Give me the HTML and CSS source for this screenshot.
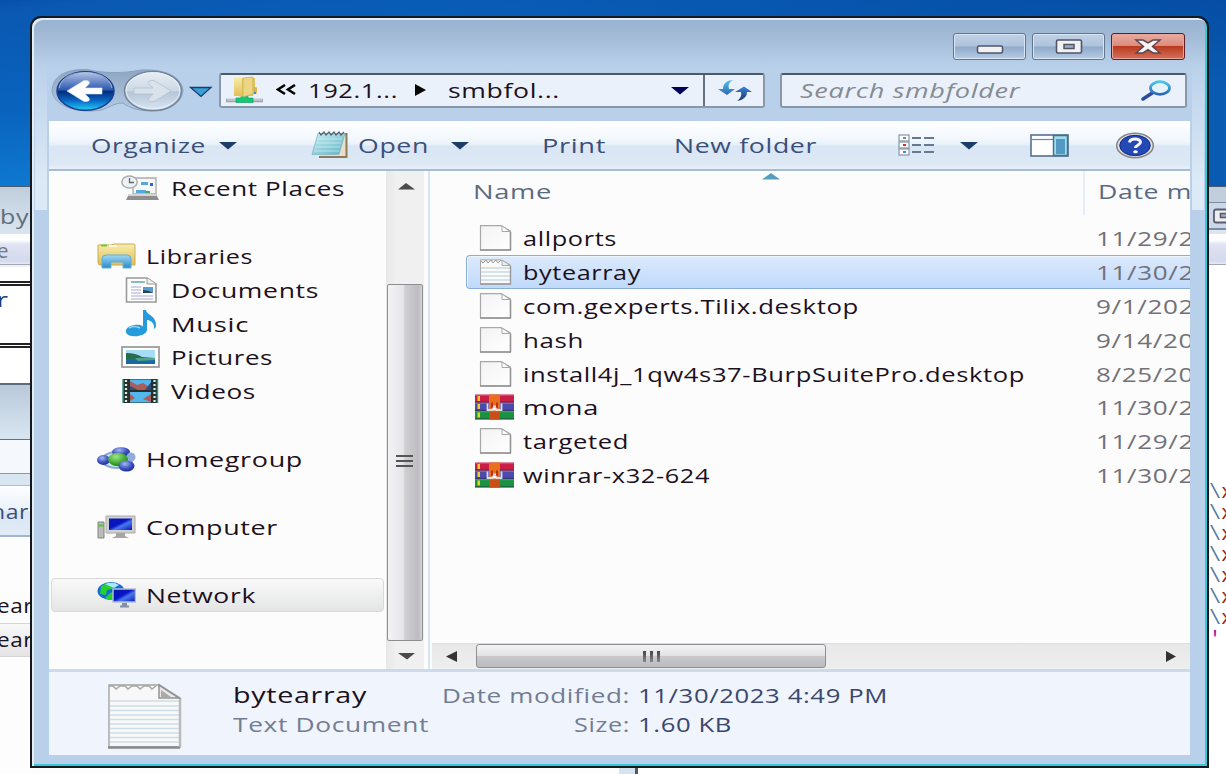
FILE: index.html
```html
<!DOCTYPE html>
<html lang="en">
<head>
<meta charset="utf-8">
<title>smbfolder</title>
<link rel="stylesheet" href="styles.css">
</head>
<body>
<svg class="defs" width="0" height="0" aria-hidden="true">
  <defs>
    <linearGradient id="paper" x1="0" y1="0" x2="1" y2="1"><stop offset="0" stop-color="#f3f3f3"/><stop offset="1" stop-color="#fff"/></linearGradient>
    <linearGradient id="ball" x1="0" y1="0" x2="0" y2="1"><stop offset="0" stop-color="#b7c6e6"/><stop offset=".48" stop-color="#2a57ae"/><stop offset=".5" stop-color="#042878"/><stop offset=".75" stop-color="#0968c4"/><stop offset="1" stop-color="#25cdf8"/></linearGradient>
    <linearGradient id="pale" x1="0" y1="0" x2="0" y2="1"><stop offset="0" stop-color="#e8eef4"/><stop offset=".5" stop-color="#cbd8e5"/><stop offset=".52" stop-color="#b5c6d9"/><stop offset="1" stop-color="#d8e5f3"/></linearGradient>
    <linearGradient id="well" x1="0" y1="0" x2="0" y2="1"><stop offset="0" stop-color="#8ea6c2"/><stop offset="1" stop-color="#b4cae4"/></linearGradient>
    <linearGradient id="folder" x1="0" y1="0" x2="0" y2="1"><stop offset="0" stop-color="#f8edab"/><stop offset="1" stop-color="#dfbd58"/></linearGradient>
    <linearGradient id="sky" x1="0" y1="0" x2="0" y2="1"><stop offset="0" stop-color="#9fd9f5"/><stop offset="1" stop-color="#2a8ac8"/></linearGradient>
    <linearGradient id="teal" x1="0" y1="0" x2="1" y2="1"><stop offset="0" stop-color="#c8f0f5"/><stop offset="1" stop-color="#5fb2c4"/></linearGradient>
    <linearGradient id="screen" x1="0" y1="0" x2="1" y2="1"><stop offset="0" stop-color="#0a1ab0"/><stop offset=".45" stop-color="#0714c4"/><stop offset=".6" stop-color="#4b78ee"/><stop offset="1" stop-color="#0716b8"/></linearGradient>
    <radialGradient id="orb" cx=".4" cy=".3" r=".7"><stop offset="0" stop-color="#a9b8f2"/><stop offset=".6" stop-color="#3f55c4"/><stop offset="1" stop-color="#1d2f94"/></radialGradient>
    <radialGradient id="green" cx=".4" cy=".3" r=".7"><stop offset="0" stop-color="#a0e580"/><stop offset="1" stop-color="#118a12"/></radialGradient>
    <linearGradient id="arrowTop" x1="0" y1="0" x2="0" y2="1"><stop offset="0" stop-color="#4fc6e8"/><stop offset="1" stop-color="#2d66b8"/></linearGradient>
    <linearGradient id="arrowBottom" x1="0" y1="0" x2="0" y2="1"><stop offset="0" stop-color="#3c86d2"/><stop offset="1" stop-color="#1b3478"/></linearGradient>
    <symbol id="page" viewBox="0 0 39 26"><path d="M5.500.7H26L35.500 6V25H5.500Z" fill="url(#paper)" stroke="#a8a8a8" stroke-width="1.200"/><path d="M5 25H36M35.500 7V25" stroke="#909090" stroke-width="1.400"/><path d="M27 1V6.500H35Z" fill="#fff" stroke="#a8a8a8"/></symbol>
    <symbol id="note" viewBox="0 0 39 26"><path d="M5.500.9H26L35.500 6V25H5.500Z" fill="#fafafa" stroke="#aaa"/><path d="M6 2L8 4 11 1 13 4 16 1 18 4 21 1 23 4 26 1" fill="none" stroke="#999"/><path d="M6 9H35M6 13H35M6 17H35M6 21H35" stroke="#c9dbe4" stroke-width="1.300"/><path d="M5 25H36M35.500 7V25" stroke="#999" stroke-width="1.400"/><path d="M27 1V6.500H35Z" fill="#eee" stroke="#aaa"/></symbol>
    <symbol id="rar" viewBox="0 0 39 25"><path d="M0 0H39V8.300H0Z" fill="#ca1d48"/><path d="M0 8.300H39V16.500H0Z" fill="#4b4ab0"/><path d="M0 16.500H39V25H0Z" fill="#199342"/><path d="M0 7.600H39M0 15.800H39M0 24.300H39" stroke="#28233d" stroke-opacity=".5" stroke-width="1.200"/><path d="M0 1H39M0 9H39M0 17.200H39" stroke="#fff" stroke-opacity=".18"/><path d="M2.500 1.500H5V6.500H2.500ZM2.500 9.500H5V14.500H2.500ZM2.500 18H5V23H2.500Z" fill="#f0cf26"/><path d="M14 0H25V25H14Z" fill="#e86f1b"/><path d="M14 17H25V25H14Z" fill="#c94f17"/><path d="M12.500 9V15.500H17V12H22V15.500H26.500V9" fill="none" stroke="#ddd" stroke-width="1.800"/><path d="M17 8V14M22 8V14" stroke="#c02e18" stroke-width="2"/><path d="M17.500 13H21.500V16H17.500Z" fill="#f7f7f7"/></symbol>
    <symbol id="down" viewBox="0 0 18 8"><path d="M0 0H18L9 7.500Z" fill="#1d3d69"/></symbol>
  </defs>
</svg>

<div class="desktop">
  <section class="back back-left">
    <div class="bg-title"><span class="fit" data-w="29">by</span></div>
    <div class="bg-menu"><span class="fit" data-w="12">e</span></div>
    <div class="bg-doc"><i class="rule"></i><span class="mono fit" data-w="14">r</span><i class="rule second"></i></div>
    <div class="bg-title2"></div>
    <div class="bg-address"></div>
    <div class="bg-gap"></div>
    <div class="bg-tool"><span class="fit" data-w="38">har</span></div>
    <div class="bg-list"><span class="fit" data-w="36">ear</span><span class="picked"><span class="fit" data-w="36">ear</span></span></div>
  </section>
  <section class="back back-right">
    <div class="bg-strip"></div>
    <div class="bg-button"><svg width="14" height="16" viewBox="0 0 14 16"><path d="M16 1.500H3Q1 1.500 1 3.500V12.500Q1 14.500 3 14.500H16Z" fill="#eee" stroke="#5a5d70" stroke-width="1.800"/><path d="M15 5.500H7.500V9.500H15" fill="#a0aabc" stroke="#555a70" stroke-width="1.600"/></svg></div>
    <div class="bg-menu"></div>
    <div class="bg-code">
      <p><b>\</b>x</p><p><b>\</b>x</p><p><b>\</b>x</p><p><b>\</b>x</p><p><b>\</b>x</p><p><b>\</b>x</p><p><b>\</b>x</p><p class="quote">'</p>
    </div>
  </section>
  <div class="back-bottom"></div>

  <main class="window">
    <header class="glass">
      <div class="caption">
        <button class="cap" aria-label="Minimize"><svg width="28" height="20" viewBox="0 0 28 20"><rect x="1.500" y="9" width="25" height="7" rx="1.500" fill="#f1f1f1" stroke="#505568" stroke-width="1.500"/></svg></button>
        <button class="cap" aria-label="Maximize"><svg width="28" height="18" viewBox="0 0 28 18"><rect x="1.500" y="2" width="25" height="13" rx="1.500" fill="#f1f1f1" stroke="#505568" stroke-width="1.600"/><rect x="9" y="6.500" width="10" height="4" fill="#9daecb" stroke="#505568" stroke-width="1.500"/></svg></button>
        <button class="cap close" aria-label="Close"><svg width="30" height="18" viewBox="0 0 30 18"><path d="M3 2H10L15 5 20 2H27L19.500 8.500 27 15H20L15 11.700 10 15H3L10.500 8.500Z" fill="#f4f4f4" stroke="#5c4650" stroke-width="1.500"/></svg></button>
      </div>
      <div class="navrow">
        <svg class="travel" width="170" height="44" viewBox="49 68 170 44">
          <path d="M52 91C53 74 69 69 87 69.500 104 73.500 124 73.500 141 70 164 69 182 76 183 91 181 104 168 111 153 111 138 111 130 108 123 103 114 103 108 108 101 110 77 114 54 106 52 91Z" fill="url(#well)" stroke="#8ba3c1"/>
          <ellipse cx="85.500" cy="91" rx="28.500" ry="19.300" fill="url(#ball)" stroke="#1a3f8c" stroke-width="1.500"/>
          <path d="M59 88C62 75 75 72.500 86 72.500 98 72.500 110 77 112 88" fill="none" stroke="#dbe5f5" stroke-opacity=".6"/>
          <path d="M67 91L84 80.500Q91 80 89 84L85 88H102V94H85L89 98Q91 102 84 101.500Z" fill="#fff" stroke="#d8e6fa" stroke-width=".6"/>
          <ellipse cx="153" cy="91" rx="28.500" ry="19.500" fill="url(#pale)" stroke="#74849a" stroke-width="1.500"/>
          <ellipse cx="153" cy="90.500" rx="26.800" ry="18" fill="none" stroke="#f4f8fc" stroke-opacity=".7"/>
          <path d="M171 91L154 80.500Q147 80 149 84L153 88H134V94H153L149 98Q147 102 154 101.500Z" fill="#d9e2eb" stroke="#b5c1cf" stroke-width=".8"/>
          <path d="M190.500 87.500H211L201 96.500Z" fill="#38a0d4" stroke="#173b72" stroke-width="1.300"/>
        </svg>
        <div class="address">
          <svg class="share" width="38" height="28" viewBox="0 0 38 28"><path d="M0 24.500H37" stroke="#9da3aa" stroke-width="3.500"/><path d="M1 24H36" stroke="#e3e6ea"/><path d="M15 19H22V22H27V26.500H10V22H15Z" fill="#14c876" stroke="#139958" stroke-width=".6"/><path d="M8 2H29V17L31 18V10L27 20H8Z" fill="#e3c65e"/><path d="M8 2L16 1V21L8 19Z" fill="url(#folder)"/><path d="M17 2L27 1V18L17 21Z" fill="#ecd583" stroke="#c8a94e" stroke-width=".7"/><path d="M27 10L31 12V15L28 18Z" fill="#d7b54c"/><path d="M29 16V18" stroke="#239ad0" stroke-width="2"/></svg>
          <svg class="chev" width="20" height="12" viewBox="0 0 20 12"><path d="M9 1L2 5.500 9 10M19 1L12 5.500 19 10" fill="none" stroke="#050505" stroke-width="2.600"/></svg>
          <span class="fit ip" data-w="90">192.1...</span>
          <svg class="crumb" width="11" height="12" viewBox="0 0 11 12"><path d="M0 0L11 6 0 12Z" fill="#050505"/></svg>
          <span class="fit folder" data-w="112">smbfol...</span>
          <svg class="drop" width="18" height="8" viewBox="0 0 18 8"><path d="M0 0H18L9 7.500Z" fill="#02025c"/></svg>
          <div class="refresh"><svg width="36" height="22" viewBox="0 0 36 22"><path d="M16 0C11 0 6 3 6 9H1L10 15 18 9H12C11 5 12 2 16 0Z" fill="url(#arrowTop)"/><path d="M20 21C26 20 30 17 30 12H35L27 6.500 18 12H24C25 16 23 19 20 21Z" fill="url(#arrowBottom)"/></svg></div>
        </div>
        <div class="search"><span class="fit" data-w="220">Search smbfolder</span><svg width="31" height="21" viewBox="0 0 31 21"><path d="M2 19L12 12.500" stroke="#2b4c9b" stroke-width="3.500" stroke-linecap="round"/><ellipse cx="19" cy="8" rx="9.500" ry="6.300" fill="#e4f3fb" stroke="url(#arrowTop)" stroke-width="2.800"/></svg></div>
      </div>
    </header>

    <div class="client">
      <nav class="toolbar">
        <span class="fit organize" data-w="115">Organize</span>
        <svg class="tri t1"><use href="#down"/></svg>
        <svg class="pad" width="38" height="28" viewBox="0 0 38 28"><path d="M8 26H35.500V3H33" fill="#e9dfc8" stroke="#8b7a5b" stroke-width="2"/><path d="M7 2.500H34L28 23.500H1Z" fill="url(#teal)" stroke="#7fb7c4" stroke-width=".8"/><path d="M8 1L10 4 13 1 15 4 18 1 20 4 23 1 25 4 28 1 30 4 33 1" fill="none" stroke="#53606c" stroke-width="1.200"/><path d="M6 8H31M5 12H30M4 16H29M3 20H28" stroke="#ddf4f7" stroke-opacity=".6"/></svg>
        <span class="fit open" data-w="71">Open</span>
        <svg class="tri t2"><use href="#down"/></svg>
        <span class="fit print" data-w="64">Print</span>
        <span class="fit newf" data-w="143">New folder</span>
        <svg class="views" width="37" height="22" viewBox="0 0 37 22"><g fill="#fff" stroke="#8794aa" stroke-width="1.200"><rect x="1" y="1" width="10" height="6"/><rect x="1" y="8" width="10" height="6"/><rect x="1" y="15" width="10" height="6"/></g><path d="M5 4H8" stroke="#60a060" stroke-width="2"/><path d="M5 11H8" stroke="#e02b1c" stroke-width="2"/><path d="M5 18H8" stroke="#4884d8" stroke-width="2"/><path d="M14 4H23M26 4H36M14 11H23M26 11H36M14 18H23M26 18H36" stroke="#667991" stroke-width="1.800"/></svg>
        <svg class="tri t3"><use href="#down"/></svg>
        <svg class="pane" width="39" height="23" viewBox="0 0 39 23"><rect x="1" y="1" width="37" height="21" fill="#fff" stroke="#56708f" stroke-width="1.600"/><path d="M2 5.500H23" stroke="#7186a0" stroke-width="1.200"/><rect x="23.500" y="1.500" width="14" height="20" fill="#9be0ee" stroke="#48708c" stroke-width="1.500"/><rect x="26" y="5" width="9" height="15" fill="#5499c6"/></svg>
        <svg class="help" width="40" height="27" viewBox="0 0 40 27"><ellipse cx="20" cy="13.500" rx="18.300" ry="12.200" fill="#e0e0e0" stroke="#858585" stroke-width="1.500"/><ellipse cx="20" cy="13.500" rx="15.300" ry="10.200" fill="#2448b4" stroke="#122a84"/><path d="M14.500 10.500C15 6 25.500 6 25.500 10.300 25.500 13 20.500 13 20.500 16" fill="none" stroke="#f5f7ff" stroke-width="3"/><ellipse cx="20.500" cy="19.700" rx="2.300" ry="1.500" fill="#fff"/></svg>
      </nav>

      <div class="content">
        <aside class="tree">
          <div class="item sub"><svg width="39" height="26" viewBox="0 0 39 26"><path d="M12 3H35V19H12Z" fill="#f7f7f7" stroke="#aaa" stroke-width="1.300"/><path d="M8 19H35L38 25H5Z" fill="#8e8e8e"/><path d="M8 19H35L36 21H7Z" fill="#d5d5d5"/><path d="M20 7H27V10H20ZM15 15H25V18H15Z" fill="#57a8dc"/><path d="M29 8H32V11H29Z" fill="#2c6ad0"/><path d="M24 17H29" stroke="#45a96c" stroke-width="2"/><ellipse cx="8.500" cy="7" rx="7.700" ry="6" fill="#edf2f5" stroke="#a8adb1" stroke-width="1.500"/><path d="M8.500 3V7.500H13" fill="none" stroke="#666" stroke-width="1.300"/></svg><span class="fit" data-w="174">Recent Places</span></div>
          <div class="item empty"></div>
          <div class="item"><svg width="39" height="26" viewBox="0 0 39 26"><path d="M1 2H14L17 1H37Q38 1 38 3V22H3Q1 22 1 19Z" fill="url(#folder)" stroke="#cbad55"/><path d="M4 2.500H10" stroke="#6dcc2d" stroke-width="2"/><path d="M12 3H20" stroke="#fff8db" stroke-width="2"/><path d="M5 25V16Q5 12 9 12H30Q34 12 34 16V25H26V19H14V25Z" fill="url(#sky)" stroke="#5cb1dc"/></svg><span class="fit" data-w="107">Libraries</span></div>
          <div class="item sub"><svg width="39" height="26" viewBox="0 0 39 26"><path d="M5.500 1H26L35 7V25H5.500Z" fill="#fff" stroke="#999" stroke-width="1.600"/><path d="M26 1V7H35" fill="#eee" stroke="#999"/><path d="M10 5H24" stroke="#62a7ae" stroke-width="1.500"/><path d="M10 10H20M10 13H20M10 16H20M10 19H32M10 22H32" stroke="#a5a7d1" stroke-width="1.200"/><path d="M22 10H32V16H22Z" fill="#569bd4"/><path d="M22 13Q27 13 32 16H22Z" fill="#26444b"/></svg><span class="fit" data-w="148">Documents</span></div>
          <div class="item sub"><svg width="39" height="27" viewBox="0 0 39 27"><path d="M22 0H25C26 6 36 5 35 17L33 19C34 11 27 10 26 10V20C25 25 17 27 11 26 2 25 3 16 14 15 19 14 22 16 22 17Z" fill="#259bdb"/><path d="M8 18Q13 15 19 18" stroke="#8fdbf6" stroke-width="1.600" fill="none"/></svg><span class="fit" data-w="78">Music</span></div>
          <div class="item sub"><svg width="39" height="22" viewBox="0 0 39 22"><rect x="1" y="1" width="37" height="20" fill="#fff" stroke="#9d9d9d" stroke-width="1.800"/><path d="M5 4H34V18H5Z" fill="#a6dcf6"/><path d="M5 7Q15 7 21 11L34 12V14H5Z" fill="#286c4c"/><path d="M5 13H34V18H5Z" fill="#1a69a7"/><path d="M14 12H34V14L17 15Z" fill="#4fa487"/></svg><span class="fit" data-w="102">Pictures</span></div>
          <div class="item sub"><svg width="39" height="26" viewBox="0 0 39 26"><path d="M2 1H36V25H2Z" fill="#26302f"/><path d="M9 1.500H30V12H9ZM9 14H30V24.500H9Z" fill="#51b7ed"/><path d="M9 3L16 7 22 5 30 10V12H9ZM9 16L14 20 9 23ZM30 16L22 21 30 24Z" fill="#ad5d58"/><path d="M9 8L17 12H9ZM30 4V12H24Z" fill="#314d7d"/><path d="M5 2V25M33.500 2V25" stroke="#d8eee8" stroke-width="2.200" stroke-dasharray="2 2"/><path d="M2 1V25M36.500 1V25" stroke="#349285" stroke-width="1.500"/></svg><span class="fit" data-w="85">Videos</span></div>
          <div class="item empty"></div>
          <div class="item"><svg width="39" height="25" viewBox="0 0 39 25"><ellipse cx="20" cy="13" rx="15" ry="8" fill="#d1e3f2" stroke="#82a9cf" stroke-width="2"/><ellipse cx="24" cy="5" rx="9" ry="4.800" fill="url(#orb)"/><ellipse cx="6.500" cy="13" rx="6.500" ry="5" fill="url(#orb)"/><ellipse cx="34" cy="10" rx="4.500" ry="4.500" fill="#8dadda"/><ellipse cx="21" cy="12.500" rx="10" ry="6.800" fill="url(#green)"/><ellipse cx="29.500" cy="19" rx="8" ry="5.500" fill="url(#orb)"/></svg><span class="fit" data-w="157">Homegroup</span></div>
          <div class="item empty"></div>
          <div class="item"><svg width="39" height="24" viewBox="0 0 39 24"><path d="M1 7H7V23H1Z" fill="#bbb" stroke="#838383"/><path d="M1.500 10.500H7" stroke="#43cf24" stroke-width="2"/><path d="M9 1H38V18H9Z" fill="#d0d0d0" stroke="#aaa"/><path d="M12 3.500H35V15H12Z" fill="url(#screen)"/><path d="M19 18H28V21L32 23H15L19 21Z" fill="#a5a5a5"/></svg><span class="fit" data-w="132">Computer</span></div>
          <div class="item empty"></div>
          <div class="item chosen"><svg width="39" height="27" viewBox="0 0 39 27"><ellipse cx="14" cy="10" rx="13.500" ry="9" fill="#1668dc"/><path d="M4 5Q11 0 19 3L15 8 10 9 9 14 3 13ZM13 12L19 10V19Q13 20 8 17Z" fill="#25d22c"/><path d="M8 3Q16 0 22 4L17 7Z" fill="#a4eafa"/><path d="M16 8H38.500V21H16Z" fill="url(#screen)" stroke="#b3bed0" stroke-width="1.500"/><path d="M25 22H30V24.500H32V26.500H23V24.500H25Z" fill="#8290a7"/></svg><span class="fit" data-w="110">Network</span></div>
        </aside>
        <div class="vscroll">
          <svg class="up" width="17" height="7" viewBox="0 0 17 7"><path d="M0 6.500L8 0 17 6.500Z" fill="#4b4b4b"/></svg>
          <div class="vthumb"><i></i><i></i><i></i></div>
          <svg class="dn" width="17" height="7" viewBox="0 0 17 7"><path d="M0 0H17L9 6.500Z" fill="#4b4b4b"/></svg>
        </div>
        <div class="split"></div>
        <section class="files">
          <div class="head"><span class="fit" data-w="79">Name</span><svg width="18" height="7" viewBox="0 0 18 7"><path d="M0 6.500L9 0 18 6.500Z" fill="#569dbf"/></svg><div class="col"><span class="fit" data-w="94">Date m</span></div></div>
          <div class="row"><svg><use href="#page"/></svg><div><span class="fit" data-w="94">allports</span></div><time class="fit" data-w="98">11/29/2</time></div>
          <div class="row active"><svg><use href="#note"/></svg><div><span class="fit" data-w="118">bytearray</span></div><time class="fit" data-w="98">11/30/2</time></div>
          <div class="row"><svg><use href="#page"/></svg><div><span class="fit" data-w="336">com.gexperts.Tilix.desktop</span></div><time class="fit" data-w="98">9/1/202</time></div>
          <div class="row"><svg><use href="#page"/></svg><div><span class="fit" data-w="61">hash</span></div><time class="fit" data-w="98">9/14/20</time></div>
          <div class="row"><svg><use href="#page"/></svg><div><span class="fit" data-w="502">install4j_1qw4s37-BurpSuitePro.desktop</span></div><time class="fit" data-w="98">8/25/20</time></div>
          <div class="row"><svg><use href="#rar"/></svg><div><span class="fit" data-w="76">mona</span></div><time class="fit" data-w="98">11/30/2</time></div>
          <div class="row"><svg><use href="#page"/></svg><div><span class="fit" data-w="106">targeted</span></div><time class="fit" data-w="98">11/29/2</time></div>
          <div class="row"><svg><use href="#rar"/></svg><div><span class="fit" data-w="187">winrar-x32-624</span></div><time class="fit" data-w="98">11/30/2</time></div>
          <div class="hscroll">
            <svg width="11" height="11" viewBox="0 0 11 11"><path d="M11 0V11L0 5.500Z" fill="#333"/></svg>
            <div class="hthumb"><i></i><i></i><i></i></div>
            <svg width="10" height="11" viewBox="0 0 10 11"><path d="M0 0V11L10 5.500Z" fill="#333"/></svg>
          </div>
        </section>
      </div>

      <footer class="details">
        <svg width="77" height="67" viewBox="0 0 77 67"><path d="M2 2H52L73 15V64H2Z" fill="#f8f8f9" stroke="#b6b6b8" stroke-width="1.800"/><path d="M2 3H6L9 6 13 3H18L21 6 25 3H30L33 6 37 3H42L45 6 49 3" fill="none" stroke="#a7a7a7" stroke-width="1.500"/><path d="M3 18H72M3 23H72M3 27.500H72M3 32H72M3 36.500H72M3 41H72M3 45.500H72M3 50H72M3 54.500H72M3 59H72" stroke="#cddde7" stroke-width="1.300"/><path d="M1 64.500H73" stroke="#87898c" stroke-width="2.500"/><path d="M73 15V64" stroke="#bbb" stroke-width="2.500"/><path d="M52 2L72 15H52Z" fill="#e8e8e8" stroke="#929292" stroke-width="1.500"/><path d="M54 7L64 14H54Z" fill="#aaa"/></svg>
        <div class="name"><span class="fit big" data-w="134">bytearray</span><span class="fit label" data-w="196">Text Document</span></div>
        <div class="keys"><span class="fit label" data-w="188">Date modified:</span><span class="fit label" data-w="56">Size:</span></div>
        <div class="vals"><span class="fit" data-w="250">11/30/2023 4:49 PM</span><span class="fit" data-w="94">1.60 KB</span></div>
      </footer>
    </div>
  </main>
</div>
<script src="fit.js"></script>
</body>
</html>
```
FILE: styles.css
```css
* { box-sizing: border-box; }
body { margin: 0; width: 1226px; height: 774px; overflow: hidden; font: 20.5px/28px "Open Sans", "Noto Sans", sans-serif; color: #1c1020; }
p { margin: 0; }
svg { display: block; flex: none; }
.defs { position: absolute; }
.fit { display: block; flex: none; white-space: pre; letter-spacing: .5px; }
.fit > span { display: inline-block; transform-origin: 0 50%; }

.desktop { position: relative; width: 1226px; height: 774px; overflow: hidden; background: linear-gradient(90deg, rgba(0,40,130,0) 35%, rgba(0,45,130,.45) 100%), linear-gradient(174deg, #0750ad 0, #0a58b2 10px, #0963bd 110px, #1180d8 215px); }

/* windows behind the explorer */
.back { position: absolute; top: 186px; height: 588px; overflow: hidden; border-top: 1px solid #4b5a6c; background: #fdfdfd; }
.back-left { left: 0; width: 30px; }
.back-right { left: 1209px; width: 17px; background: #fff; }
.bg-title { height: 47px; padding-top: 15px; background: linear-gradient(#bfcddc, #dae5f0); color: #626d7b; }
.bg-menu { height: 31px; padding: 2px 0; background: linear-gradient(#fff 0, #fff 20%, #dfe3f2 35%, #d4d9ed 90%, #e7ebf6); border-bottom: 1px solid #a5a7b2; color: #737986; }
.bg-menu .fit { margin-left: -3px; }
.bg-doc { height: 118px; padding-top: 14px; background: #fff; border-top: 2px solid #f1f1f3; }
.rule { display: block; height: 5px; border-top: 2px solid #222; border-bottom: 2px solid #222; }
.rule.second { margin-top: 27px; }
.mono { font-family: "Liberation Mono", monospace; color: #203a78; height: 28px; margin: 2px 0 0 -4px; }
.bg-title2 { height: 57px; background: linear-gradient(#b9c9da, #d9e6f2); border-top: 2px solid #5d6b7b; border-bottom: 1px solid #68717b; }
.bg-address { height: 34px; background: #f5f8fd; border-bottom: 1px solid #8b98a6; }
.bg-gap { height: 12px; background: #d8e6f2; border-bottom: 1px solid #aebfd4; }
.bg-tool { height: 51px; padding-top: 11px; background: linear-gradient(#fdfeff, #eaf2fb 50%, #dae6f4 51%, #e1ebf6); border-bottom: 2px solid #a0b4cd; color: #3b4f78; }
.bg-tool .fit { margin-left: -9px; }
.bg-list { padding-top: 52px; }
.bg-list .fit { height: 34px; line-height: 33px; margin-left: -3px; }
.bg-list .picked { display: block; width: 30px; height: 34px; background: linear-gradient(#f8f8f8, #e4e4e4); border: solid #d5d5d5; border-width: 1px 0; }
.bg-list .picked .fit { line-height: 31px; height: 32px; }
.bg-strip { height: 16px; background: #c1cedc; border-bottom: 1px solid #7d8ba3; }
.bg-button { height: 31px; padding: 5px 0 0 4px; background: linear-gradient(#ccd8e8 25px, #7b8ba4 25px, #7b8ba4 27px, #dbe6f1 27px); }
.bg-code { padding-top: 217px; font: 20px/21px "Liberation Mono", monospace; color: #942013; white-space: nowrap; }
.bg-code b { font-weight: 400; color: #527aa0; }
.bg-code p { height: 21px; }
.bg-code .quote { color: #a0209a; }
.back-bottom { position: absolute; left: 0; top: 768px; width: 1226px; height: 6px; background: linear-gradient(90deg, #fdfdfd 619px, #d6e4f0 619px, #d6e4f0 635px, #53585e 635px, #53585e 638px, #fff 638px); }

/* explorer */
.window { position: absolute; left: 30px; top: 16px; width: 1179px; height: 752px; padding: 0 17px 11px; border: 2px solid #15191e; border-radius: 11px 11px 0 0; background: linear-gradient(#97b1cf 0, #a2bad6 18px, #b9d0ea 48px, #b9d0ea 100%); box-shadow: inset 2px 2px 0 #e3edf6, inset -2px -2px 0 #38c9d8; }
.window::before, .window::after { content: ""; position: absolute; top: 44px; width: 12px; height: 148px; background: linear-gradient(rgba(220,233,246,0), #dce9f6 80%); }
.window::before { left: 3px; }
.window::after { right: 3px; }
.glass { height: 103px; }
.caption { height: 50px; padding: 15px 5px 0 0; display: flex; justify-content: flex-end; gap: 6px; }
.cap { width: 73px; height: 27px; padding: 0; display: flex; align-items: center; justify-content: center; border: 1.5px solid #63748e; border-radius: 3px; box-shadow: inset 0 0 0 1px #dae6f4; background: linear-gradient(#bfd1e6 0, #adc3dd 48%, #8fa9c8 52%, #b6cde7 100%); }
.cap.close { width: 74px; border-color: #611c25; box-shadow: inset 0 0 0 1px #e8a59b; background: linear-gradient(#e9aca2 0, #dc8a7c 47%, #b93a20 50%, #d47359 100%); }
.navrow { display: flex; align-items: center; height: 44px; }
.address { width: 546px; height: 35px; display: flex; align-items: center; padding-left: 5px; border: 2px solid #8a97a8; border-top-color: #4f5965; border-radius: 3px; background: #eaf1fa; }
.address .fit, .search .fit { margin-top: -1px; }
.chev { margin-left: 12px; }
.ip { margin-left: 12px; }
.crumb { margin-left: 17px; }
.folder { margin-left: 22px; }
.drop { margin-left: 111px; margin-top: 2px; }
.refresh { margin-left: auto; width: 60px; height: 31px; padding: 5px 0 0 12px; border-left: 2px solid #657080; }
.search { width: 407px; height: 35px; margin-left: 15px; padding: 0 13px 0 18px; display: flex; align-items: center; justify-content: space-between; border: 2px solid #8a97a8; border-top-color: #4f5965; border-radius: 3px; background: #eaf1fa; font-style: italic; color: #858b92; }
.client { display: flex; flex-direction: column; width: 1141px; height: 634px; background: #fcfcfc; }
.toolbar { display: flex; align-items: center; height: 50px; padding-left: 42px; border-bottom: 2px solid #a9bbd1; background: linear-gradient(#fff 0, #f1f7fd 40%, #e6eff9 50%, #dae6f4 52%, #dde8f5 90%, #e8f1fa 100%); color: #3b4f7b; }
.tri { width: 18px; height: 8px; margin-top: 2px; }
.t1 { margin-left: 13px; }
.pad { margin-left: 74px; }
.open { margin-left: 9px; }
.t2 { margin-left: 22px; }
.print { margin-left: 73px; }
.newf { margin-left: 68px; }
.views { margin-left: 81px; }
.t3 { margin-left: 25px; }
.pane { margin-left: 52px; margin-top: 1px; }
.help { margin-left: 46px; margin-top: 1px; }
.content { display: grid; grid-template-columns: 337px 38px 8px 758px; height: 498px; }
.item { height: 33.9px; display: flex; align-items: center; gap: 10px; padding-left: 47px; border: 1px solid transparent; }
.item.sub { padding-left: 71px; gap: 10.500px; }
.item.chosen { margin: 0 2px; padding-left: 45px; border-color: #d9d9d9; border-radius: 4px; background: linear-gradient(#f9f9f9, #e4e5e6); }
.vscroll { background: linear-gradient(90deg, #e7e7e7, #f0f0f0 25%); }
.up { margin: 12px 0 0 12px; }
.vthumb { width: 36px; height: 357px; margin: 94px 0 0 1px; padding-top: 170px; border: 1.5px solid #8d8e91; border-radius: 2px; background: linear-gradient(90deg, #f4f4f5 0, #e5e5e7 45%, #cfcfd3 50%, #bcbcc1 90%, #d6d6da); }
.vthumb i { display: block; width: 17px; height: 2px; margin: 0 0 3px 8px; background: #555; }
.dn { margin: 12px 0 0 12px; }
.split { width: 6px; border-right: 2px solid #d7e6f5; }
.files { position: relative; display: flex; flex-direction: column; overflow: hidden; }
.head { display: flex; flex: none; height: 50px; padding: 6px 0 0 41px; color: #5a6a83; }
.head svg { margin: -4px 0 0 210px; }
.col { margin: -6px 0 0 303px; height: 44px; padding: 6px 0 0 13px; border-left: 2px solid #e4eef8; }
.row { display: flex; flex: none; align-items: center; height: 33.9px; margin-left: 34px; padding-left: 9px; }
.row svg { width: 39px; height: 26px; margin-right: 9px; }
.row div { flex: none; width: 573px; }
.row time { color: #737178; }
.row.active { padding-left: 8px; border: 1.5px solid #8aadd9; border-right: 0; border-radius: 4px 0 0 4px; background: linear-gradient(#dceafc, #c0dafb); box-shadow: inset 1px 1px 0 #edf5ff; }
.hscroll { display: flex; align-items: center; height: 26px; margin-top: auto; padding: 0 14px 1px; border-top: 1px solid #dedede; background: linear-gradient(#e8e8e8, #eee); }
.hthumb { display: flex; justify-content: center; align-items: center; gap: 4px; width: 350px; height: 24px; margin: 0 340px 0 19px; border: 1.5px solid #8d8e91; border-radius: 3px; background: linear-gradient(#f4f4f5, #e2e2e4 48%, #c9c9cc 52%, #bbbbc0); }
.hthumb i { width: 3px; height: 11px; background: linear-gradient(#444, #888); }
.details { display: flex; height: 86px; padding: 11px 0 0 58px; border-top: 3px solid #ccdaec; background: #f0f4fc; color: #3a476e; }
.name { width: 209px; margin-left: 49px; }
.keys { display: flex; flex-direction: column; align-items: flex-end; width: 188px; }
.details .fit { height: 29px; line-height: 24px; }
.vals { margin-left: 8px; }
.label { color: #727d94; }
.big { color: #1a1020; font-size: 21.5px; }
```
FILE: fit.js
```js
// Stretches each label horizontally to the width given in data-w.
document.querySelectorAll('.fit').forEach(function (el) {
  var inner = document.createElement('span');
  inner.textContent = el.textContent;
  el.textContent = '';
  el.appendChild(inner);
  var target = Number(el.dataset.w);
  var natural = inner.getBoundingClientRect().width;
  el.style.width = target + 'px';
  inner.style.transform = 'scaleX(' + target / natural + ')';
});
```
